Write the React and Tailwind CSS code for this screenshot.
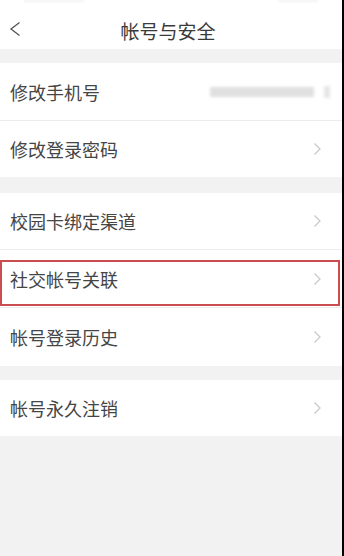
import React from 'react';

const font = { fontFamily: '"Noto Sans CJK SC", "Noto Sans", sans-serif' };

const Chevron = () => (
  <svg width="9" height="14" viewBox="0 0 9 14" fill="none" className="shrink-0">
    <path d="M1.5 1.5 L7 7 L1.5 12.5" stroke="#c9c9c9" strokeWidth="1.3" />
  </svg>
);

const Row = ({ label, children, border = true, highlight = false, h = 'h-[57px]' }) => (
  <div className={`relative bg-white flex items-center justify-between pl-[10px] pr-[20px] ${h} ${border ? 'border-b border-[#ededed]' : ''}`}>
    <span className="text-[18px] text-[#454545] leading-none">{label}</span>
    {children || <Chevron />}
    {highlight && (
      <div className="absolute left-0 right-[2px] top-[10px] bottom-[1px] border-2 border-[#cc4d50] pointer-events-none" />
    )}
  </div>
);

export default function App() {
  return (
    <div className="w-[344px] h-[556px] flex bg-[#f2f2f2] overflow-hidden" style={font}>
      <div className="flex-1 flex flex-col">
        {/* header */}
        <div className="relative h-[49px] bg-white flex items-center justify-center">
          <div className="absolute top-0 left-[24px] right-[24px] h-[5px] flex justify-between opacity-20">
            <div className="w-[60px] h-[2px] bg-[#bbb] blur-[1px]" />
            <div className="w-[40px] h-[2px] bg-[#bbb] blur-[1px]" />
          </div>
          <svg width="14" height="16" viewBox="0 0 14 16" fill="none" className="absolute left-[8px] top-[21px]">
            <path d="M11.5 1.5 L3 8 L11.5 14.5" stroke="#555" strokeWidth="1.3" />
          </svg>
          <span className="text-[19px] text-[#3a3a3a] pt-[14px] -ml-[6px]">帐号与安全</span>
        </div>

        <div className="h-[14px]" />

        <Row label="修改手机号" h="h-[58px]">
          <div className="flex items-center gap-[10px] mr-[-8px] blur-[1.5px]">
            <div className="w-[104px] h-[10px] bg-[#e0e0e0]" />
            <div className="w-[6px] h-[12px] bg-[#e6e6e6]" />
          </div>
        </Row>
        <Row label="修改登录密码" border={false} h="h-[56px]" />

        <div className="h-[16px]" />

        <Row label="校园卡绑定渠道" />
        <Row label="社交帐号关联" highlight h="h-[58px]" />
        <Row label="帐号登录历史" border={false} h="h-[58px]" />

        <div className="h-[14px]" />

        <Row label="帐号永久注销" border={false} h="h-[56px]" />
      </div>
      <div className="w-[2px] bg-black" />
    </div>
  );
}
